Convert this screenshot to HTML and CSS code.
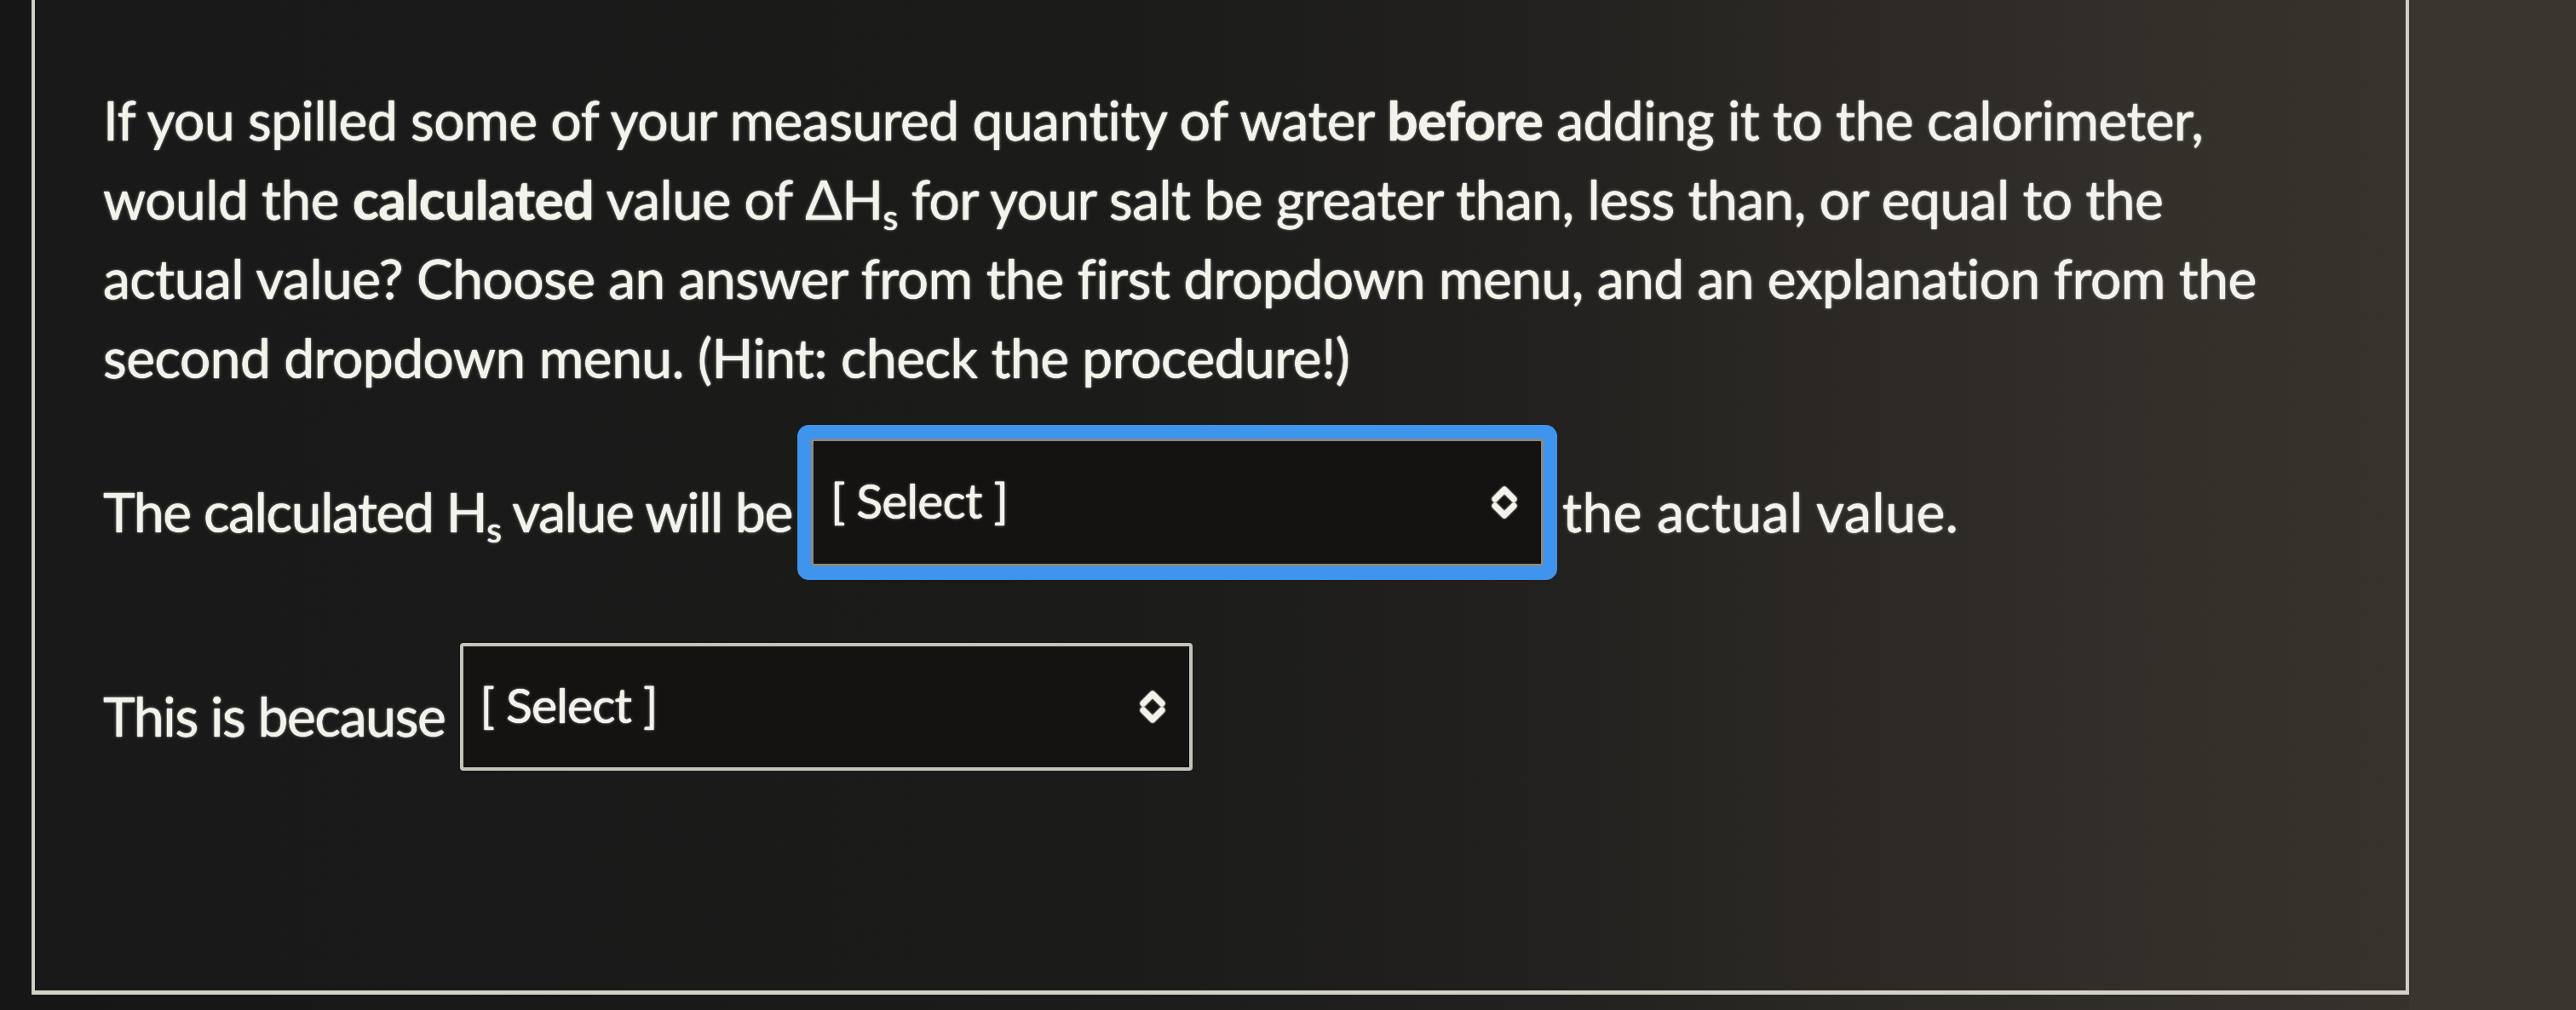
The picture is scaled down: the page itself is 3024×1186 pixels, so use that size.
FILE: index.html
```html
<!DOCTYPE html>
<html lang="en">
<head>
<meta charset="utf-8">
<title>Quiz question</title>
<link rel="stylesheet" href="styles.css">
</head>
<body>
<div class="screen">
  <div class="panel">
    <div class="question">
      <p class="prompt">If you spilled some of your measured quantity of water <strong>before</strong> adding it to the calorimeter,<br>would the <strong>calculated</strong> value of ΔH<sub>s</sub> for your salt be greater than, less than, or equal to the<br>actual value? Choose an answer from the first dropdown menu, and an explanation from the<br>second dropdown menu. (Hint: check the procedure!)</p>
      <div class="row row-first">
        <span class="label">The calculated H<sub>s</sub> value will be</span>
        <div class="select focused">
          <span class="value">[ Select ]</span>
          <svg class="arrows" viewBox="0 0 34 46" width="34" height="46" aria-hidden="true">
            <polyline points="6,19 17,8 28,19"/>
            <polyline points="6,27 17,38 28,27"/>
          </svg>
        </div>
        <span class="label label-after">the actual value.</span>
      </div>
      <div class="row row-second">
        <span class="label">This is because</span>
        <div class="select">
          <span class="value">[ Select ]</span>
          <svg class="arrows" viewBox="0 0 34 46" width="34" height="46" aria-hidden="true">
            <polyline points="6,19 17,8 28,19"/>
            <polyline points="6,27 17,38 28,27"/>
          </svg>
        </div>
      </div>
    </div>
  </div>
  <div class="side"></div>
</div>
</body>
</html>
```
FILE: styles.css
```css
html, body {
  margin: 0;
  padding: 0;
}

body {
  width: 3024px;
  height: 1186px;
  overflow: hidden;
  background: #171717;
  font-family: "Lato", "Liberation Sans", sans-serif;
  color: #f3f3ec;
}

.screen {
  display: flex;
  width: 3024px;
  height: 1186px;
  background: linear-gradient(to right, #161616 0%, #1b1b1a 40%, #22211f 60%, #2d2a26 75%, #36312b 92%, #3a342e 100%);
}

.panel {
  box-sizing: border-box;
  margin-left: 37px;
  width: 2791px;
  height: 1168px;
  border-left: 4px solid #cfcfc4;
  border-right: 4px solid #cfcfc4;
  border-bottom: 5px solid #d2d2c6;
  background: linear-gradient(to right, #191919 0%, #1b1b1a 45%, #21201e 62%, #2b2824 75%, #332f29 90%, #37322c 100%);
}

.side {
  flex: 1;
  background: #3b352f;
}

.question {
  padding: 94px 0 0 80px;
  text-shadow: 0 0 1px #ffffff, 0 0 1.5px #ffffff, 0 0 4px rgba(255, 255, 240, 0.3);
}

.prompt {
  margin: 0;
  font-size: 64px;
  line-height: 93px;
  white-space: nowrap;
  letter-spacing: -0.5px;
}

.prompt strong {
  font-weight: 700;
}

sub {
  font-size: 0.64em;
  line-height: 0;
  vertical-align: -0.3em;
}

.row {
  display: flex;
  align-items: flex-start;
  gap: 22px;
  font-size: 64px;
  line-height: 93px;
  letter-spacing: -1.3px;
  white-space: nowrap;
}

.row-first {
  margin-top: 49px;
}

.row-second {
  margin-top: 90px;
  gap: 17px;
}

.label {
  margin-top: 39px;
}

.label-after {
  letter-spacing: 0.6px;
}

.select {
  box-sizing: border-box;
  width: 860px;
  height: 150px;
  display: flex;
  align-items: center;
  justify-content: space-between;
  padding: 0 26px 0 20px;
  border: 4px solid #c4c4b8;
  border-radius: 4px;
  background: #141312;
  font-size: 57px;
  letter-spacing: -0.8px;
}

.select .value {
  margin-top: -6px;
}

.select.focused {
  border: 3px solid #8a8a82;
  box-shadow: 0 0 0 16px #3f95ee;
}

.arrows {
  flex: none;
  fill: none;
  stroke: #f3f3ec;
  stroke-width: 7;
  stroke-linecap: round;
  stroke-linejoin: round;
  filter: drop-shadow(0 0 1px #ffffff);
}
```
